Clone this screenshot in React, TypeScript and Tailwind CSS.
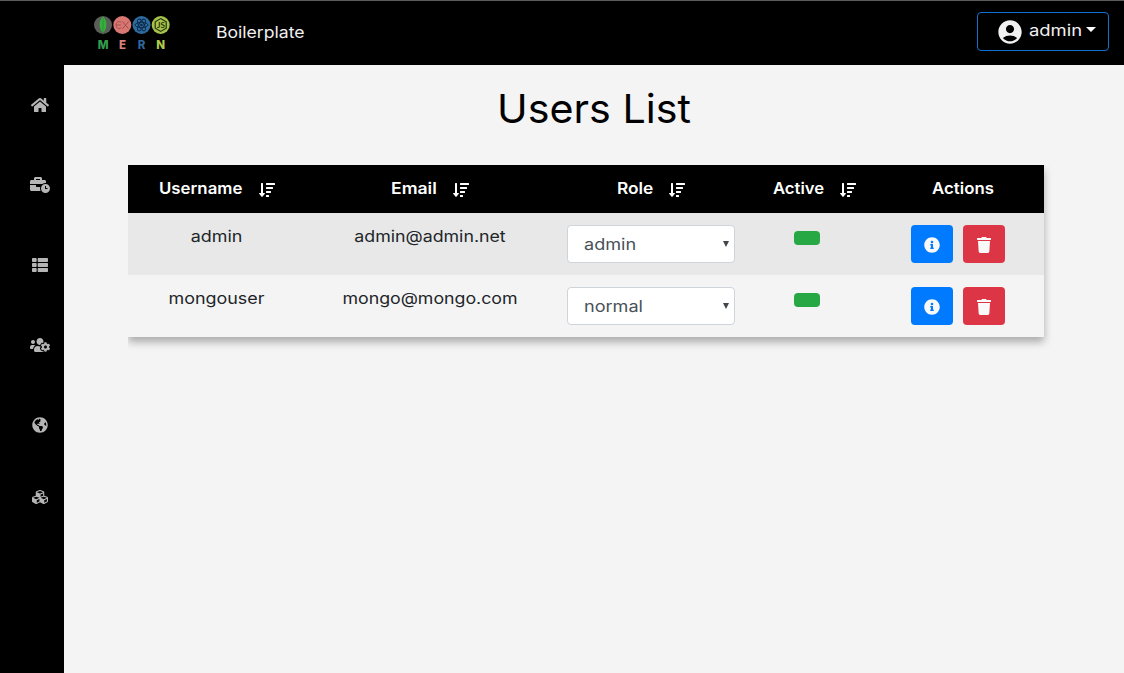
import type { ReactNode } from 'react';
import {
  FaBusinessTime,
  FaCubes,
  FaGlobeAmericas,
  FaHome,
  FaInfoCircle,
  FaSortAmountDown,
  FaThList,
  FaTrash,
  FaUsersCog,
} from 'react-icons/fa';
import { MdAccountCircle } from 'react-icons/md';

function MernLogo() {
  return (
    <svg width="78" height="40" viewBox="0 0 78 40" className="block shrink-0" aria-label="MERN">
      <circle cx="10" cy="12" r="9" fill="#5a5d58" />
      <path d="M10 3.500 C14.600 8 14.600 15 10 20 C5.400 15 5.400 8 10 3.500Z" fill="#35b03c" />
      <path d="M10 5V21.500" stroke="#24852f" strokeWidth=".6" />
      <circle cx="29.300" cy="12" r="9" fill="#d97873" />
      <g fill="none" stroke="#a34f4e" strokeWidth="1">
        <path d="M28.300 9.700C27 8 23.200 8 23 12H28.200M28.300 14.400C27 16.500 23.200 16 23 12" />
        <path d="M29.500 8.500L35.500 15.800M35.500 8.500L29.500 15.800" />
      </g>
      <circle cx="48.500" cy="12" r="9" fill="#2e6ca0" />
      <g fill="none" stroke="#0d2b4b" strokeWidth="1">
        <ellipse cx="48.500" cy="12" rx="6.500" ry="2.600" />
        <ellipse cx="48.500" cy="12" rx="6.500" ry="2.600" transform="rotate(60 48.500 12)" />
        <ellipse cx="48.500" cy="12" rx="6.500" ry="2.600" transform="rotate(120 48.500 12)" />
      </g>
      <circle cx="48.500" cy="12" r="1.300" fill="#0d2b4b" />
      <circle cx="67.700" cy="12" r="9" fill="#a6c24b" />
      <path d="M67.700 5.600 L73.200 8.800V15.200L67.700 18.400L62.200 15.200V8.800Z" fill="none" stroke="#26330c" strokeWidth="1.200" />
      <text x="67.900" y="14.900" textAnchor="middle" fontSize="8" fontWeight="700" fontFamily="Lato, sans-serif" fill="#26330c">JS</text>
      <g fontFamily="Inter, sans-serif" fontSize="11.500" fontWeight="800" textAnchor="middle">
        <text x="10.200" y="36.300" fill="#349d4d">M</text>
        <text x="29.500" y="36.300" fill="#d9807b">E</text>
        <text x="48.500" y="36.300" fill="#31659b">R</text>
        <text x="67.700" y="36.300" fill="#b3cb4a">N</text>
      </g>
    </svg>
  );
}

function Navbar() {
  return (
    <header className="flex h-[65px] shrink-0 items-start border-t border-[#5c5c5c] bg-black pl-[93px] pr-[15px] text-[#f1f1f1]">
      <div className="pt-3">
        <MernLogo />
      </div>
      <span className="ml-[45px] mt-[19px] origin-left scale-x-110 leading-6">Boilerplate</span>
      <button className="ml-auto mt-[11px] flex h-[39px] w-[132px] items-center rounded border border-[#1272d3] pl-[18px]">
        <MdAccountCircle className="size-7" />
        <span className="-mt-[3px] ml-[5px] w-[54px] origin-left scale-x-[1.15] text-left leading-6">admin</span>
        <span className="-mt-[5px] ml-[3px] border-x-[5px] border-t-[5px] border-x-transparent border-t-white" />
      </button>
    </header>
  );
}

function Sidebar() {
  return (
    <nav className="flex w-16 shrink-0 flex-col items-center bg-black pl-4 pt-8 text-[#b5b5b5]">
      <FaHome className="h-4 w-[18px]" />
      <FaBusinessTime className="mt-16 h-4 w-5" />
      <FaThList className="mt-16 size-4" />
      <FaUsersCog className="mt-16 h-4 w-5" />
      <FaGlobeAmericas className="mt-16 size-4" />
      <FaCubes className="mt-14 size-4" />
    </nav>
  );
}

function SortableHeader({ children }: { children: ReactNode }) {
  return (
    <th className="p-0 align-top font-semibold">
      <div className="flex justify-center pt-[11px] leading-6">
        {children}
        <FaSortAmountDown className="ml-4 mt-[6px] size-4" />
      </div>
    </th>
  );
}

function RoleSelect({ value }: { value: string }) {
  return (
    <div className="mx-auto mt-3 flex h-[38px] w-[168px] items-center rounded border border-[#ced4da] bg-white pl-4 pr-[5px] text-[#495057]">
      <span className="origin-left scale-x-[1.13] leading-6">{value}</span>
      <span className="-mt-px ml-auto border-x-[3px] border-t-[6px] border-x-transparent border-t-[#40464c]" />
    </div>
  );
}

const users = [
  { name: 'admin', email: 'admin@admin.net', role: 'admin' },
  { name: 'mongouser', email: 'mongo@mongo.com', role: 'normal' },
];

function UsersTable() {
  return (
    <table className="ml-16 mt-7 w-[916px] table-fixed border-collapse text-center text-[#212529] shadow-[0_5px_8px_rgba(0,0,0,0.3)] [clip-path:inset(0_-20px_-20px_0)]">
      <colgroup>
        <col className="w-[177px]" />
        <col className="w-[250px]" />
        <col className="w-[192px]" />
        <col className="w-[135px]" />
        <col className="w-[162px]" />
      </colgroup>
      <thead>
        <tr className="h-12 bg-black text-white">
          <SortableHeader>
            <span className="w-[84px] origin-left scale-x-[1.05] text-left">Username</span>
          </SortableHeader>
          <SortableHeader>
            <span className="w-[46px] origin-left scale-x-[1.1] text-left">Email</span>
          </SortableHeader>
          <SortableHeader>
            <span className="w-9 origin-left scale-x-[1.08] text-left">Role</span>
          </SortableHeader>
          <SortableHeader>
            <span className="w-[51px] origin-left scale-x-[1.04] text-left">Active</span>
          </SortableHeader>
          <th className="p-0 align-top font-semibold">
            <div className="scale-x-[1.05] pt-[11px] leading-6">Actions</div>
          </th>
        </tr>
      </thead>
      <tbody>
        {users.map((user) => (
          <tr key={user.name} className="h-[62px] bg-[#f4f4f4] odd:bg-[#e8e8e8]">
            <td className="p-0 align-top">
              <div className="scale-x-[1.12] pt-[11px] leading-6">{user.name}</div>
            </td>
            <td className="p-0 align-top">
              <div className="scale-x-[1.11] pt-[11px] leading-6">{user.email}</div>
            </td>
            <td className="p-0 align-top">
              <RoleSelect value={user.role} />
            </td>
            <td className="p-0 align-top">
              <div className="ml-[47px] mt-[18px] h-[14px] w-[26px] rounded bg-[#28a745]" />
            </td>
            <td className="p-0 align-top">
              <div className="ml-[29px] mt-3 flex gap-[10px] text-[#f8f8f8]">
                <button className="flex h-[38px] w-[42px] items-center justify-center rounded bg-[#007bff] pt-[2px]">
                  <FaInfoCircle className="size-4" />
                </button>
                <button className="flex h-[38px] w-[42px] items-center justify-center rounded bg-[#dc3545] pt-[2px]">
                  <FaTrash className="h-4 w-[14px]" />
                </button>
              </div>
            </td>
          </tr>
        ))}
      </tbody>
    </table>
  );
}

export default function App() {
  return (
    <div className="flex h-screen flex-col overflow-hidden bg-[#f4f4f4] font-['Inter','Liberation_Sans',sans-serif] text-base">
      <Navbar />
      <div className="flex flex-1">
        <Sidebar />
        <main className="flex-1 pt-5">
          <h1 className="h-[52px] scale-x-[1.03] text-center text-[40px] leading-[48px] text-black">Users List</h1>
          <UsersTable />
        </main>
      </div>
    </div>
  );
}
